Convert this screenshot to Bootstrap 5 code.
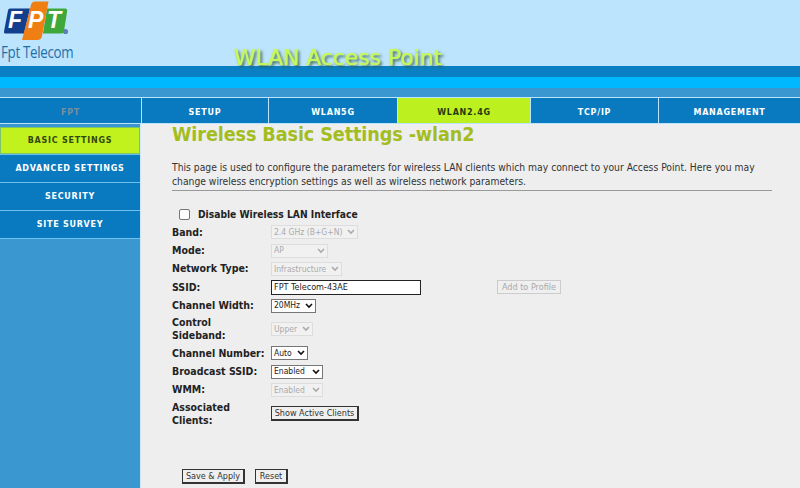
<!DOCTYPE html>
<html lang="en"><head><meta charset="utf-8"><title>WLAN Access Point</title>
<link rel="stylesheet" href="https://cdn.jsdelivr.net/npm/bootstrap@5.3.0/dist/css/bootstrap.min.css">
<style>
html,body{height:488px;overflow:hidden}
body{background:#eee;font-family:"DejaVu Sans Condensed","DejaVu Sans",sans-serif;font-size:10.5px;color:#222}
.hdr{height:66px;background:#bde4fd;position:relative}
.logo-svg{display:block}
.logo-name{font-family:"Open Sans",sans-serif;font-size:15.5px;letter-spacing:-.35px;color:#1d6fa8;line-height:1;position:absolute;left:1px;top:45px;white-space:nowrap;transform:scaleX(.86);transform-origin:left center}
.hdr-title{font-family:"DejaVu Sans",sans-serif;position:absolute;left:234px;top:45px;font-size:21.8px;line-height:26px;color:#c6f85c;text-shadow:0 0 1px #c6f85c,2px 2px 3px #2f5f46;white-space:nowrap;z-index:2}
.band-a{height:11px;background:#0a7fc4}.band-b{height:11px;background:#00b8ff}.band-c{height:9px;background:#3a97cf}
.topnav{height:27px;background:#bde4fd;padding-top:1px;gap:1px}
.tab-item{background:#0a7ac0;color:#fff;font-family:"DejaVu Sans",sans-serif;font-weight:700;font-size:8px;letter-spacing:.75px;height:25px;padding-top:4px;display:flex;align-items:center;justify-content:center}
.tab-on{background:#bdf01f;color:#263a10}
.tab-side{width:141px;color:#7c8f9e}
.w1{width:126px}.w2{width:128px}.w3{width:132px}.w4{width:127px}.w5{flex:1}
.main-wrap{height:364px}
.sidebar{width:141px;background:#3a97cf;border-right:1px solid #cfe6f5;flex:none;padding-top:3px}
.side-item{height:27px;margin-bottom:1px;background:#0a7ac0;color:#fff;font-family:"DejaVu Sans",sans-serif;font-weight:700;font-size:8px;letter-spacing:.75px;display:flex;align-items:center;justify-content:center;box-shadow:0 1px 0 #6fc0ee}
.side-on{background:#c2f21d;color:#33470f;border:1px solid #7cc46a}
.pane{flex:1;padding-left:31px;padding-right:28px;min-width:0}
.pg-title{font-family:"DejaVu Sans Condensed",sans-serif;font-size:19.6px;font-weight:700;color:#a3bd1f;line-height:22px;margin:0 0 14px;letter-spacing:-.1px}
.pg-intro{margin:0;line-height:14px;color:#333;font-size:10.25px}
.rule{margin:2px 0 0;border:0;border-top:1px solid #999;opacity:1}
.chk-row{margin-top:16px;margin-bottom:1px;height:15px;padding-left:7px;font-weight:700;font-size:10.2px;color:#222}
.fake-chk{width:11px;height:11px;border:1px solid #767676;border-radius:2px;background:#fff;margin-right:8px;flex:none}
.frow{height:18.4px;display:flex;align-items:center}
.flabel{width:99px;flex:none;font-weight:700;line-height:13px;color:#222}
.frow-tall{height:29px}
.sel{font-family:"DejaVu Sans Condensed",sans-serif;font-size:8.5px;height:14px;padding:0 2px;border:1px solid #767676;background:#fff;color:#222;display:flex;align-items:center;justify-content:space-between;gap:2px;white-space:nowrap;overflow:hidden}
.sel svg{flex:none}
.sel-off{border-color:#ddd;background:#f1f1f1;color:#aaa}
.txt{width:150px;height:15px;border:1px solid #222;border-radius:0;background:#fff;font-size:9px;padding:0 2px;font-family:inherit;color:#222}
.btn-prof{margin-left:76px;width:64px;height:14px;border:1px solid #ccc;background:#efefef;color:#aaa;font-size:9px;padding:0;line-height:12px;font-family:inherit}
.btn-raw{height:15px;background:#efefef;border:1px solid #333;border-right-width:2px;border-bottom-width:2px;font-size:9px;padding:0;line-height:11px;font-family:inherit;color:#333;white-space:nowrap}
.foot-row{margin-top:41px;padding-left:10px;gap:10px}
</style></head><body>
<header class="hdr">
<svg class="logo-svg" width="72" height="44" viewBox="0 0 72 44">
<path d="M10 8.500H30L24 33.500H6q-2.500 0-2-2L8 10.500q.4-2 2-2z" fill="#123f8e"/>
<path d="M47 8.500H65.500q2 0 1.700 2.500L64 31q-.4 2.500-2.500 2.500H43z" fill="#3fa83a"/>
<path d="M31 5q.8-3.500 4-3.500H48.500L42 36q-.8 4-4.500 4H22z" fill="#f07f13"/>
<circle cx="65.500" cy="31.500" r="2.600" fill="#5d7fb5"/>
<text x="8" y="27.500" font-family="Liberation Sans" font-weight="700" font-style="italic" font-size="23" fill="#fff">F</text>
<text x="28" y="27.500" font-family="Liberation Sans" font-weight="700" font-style="italic" font-size="23" fill="#fff">P</text>
<text x="47" y="27.500" font-family="Liberation Sans" font-weight="700" font-style="italic" font-size="23" fill="#fff">T</text>
</svg>
<div class="logo-name">Fpt Telecom</div>
<div class="hdr-title">WLAN Access Point</div>
</header>
<div class="band-a"></div><div class="band-b"></div><div class="band-c"></div>
<nav class="topnav d-flex">
<div class="tab-item tab-side">FPT</div>
<div class="tab-item w1">SETUP</div>
<div class="tab-item w2">WLAN5G</div>
<div class="tab-item tab-on w3">WLAN2.4G</div>
<div class="tab-item w4">TCP/IP</div>
<div class="tab-item w5">MANAGEMENT</div>
</nav>
<div class="main-wrap d-flex">
<aside class="sidebar">
<div class="side-item side-on">BASIC SETTINGS</div>
<div class="side-item">ADVANCED SETTINGS</div>
<div class="side-item">SECURITY</div>
<div class="side-item">SITE SURVEY</div>
</aside>
<main class="pane">
<h1 class="pg-title">Wireless Basic Settings -wlan2</h1>
<p class="pg-intro">This page is used to configure the parameters for wireless LAN clients which may connect to your Access Point. Here you may change wireless encryption settings as well as wireless network parameters.</p>
<hr class="rule">
<div class="chk-row d-flex align-items-center"><span class="fake-chk"></span>Disable Wireless LAN Interface</div>
<div class="frow"><div class="flabel">Band:</div><div class="sel sel-off" style="width:87px">2.4 GHz (B+G+N)<svg width="8" height="6" viewBox="0 0 8 6"><path d="M1 1l3 3 3-3" fill="none" stroke="#aaa" stroke-width="1.600"/></svg></div></div>
<div class="frow"><div class="flabel">Mode:</div><div class="sel sel-off" style="width:57px">AP<svg width="8" height="6" viewBox="0 0 8 6"><path d="M1 1l3 3 3-3" fill="none" stroke="#aaa" stroke-width="1.600"/></svg></div></div>
<div class="frow"><div class="flabel">Network Type:</div><div class="sel sel-off" style="width:71px">Infrastructure<svg width="8" height="6" viewBox="0 0 8 6"><path d="M1 1l3 3 3-3" fill="none" stroke="#aaa" stroke-width="1.600"/></svg></div></div>
<div class="frow"><div class="flabel">SSID:</div><input class="txt" type="text" value="FPT Telecom-43AE"><button class="btn-prof" type="button">Add to Profile</button></div>
<div class="frow"><div class="flabel">Channel Width:</div><div class="sel" style="width:45px">20MHz<svg width="8" height="6" viewBox="0 0 8 6"><path d="M1 1l3 3 3-3" fill="none" stroke="#111" stroke-width="1.600"/></svg></div></div>
<div class="frow frow-tall"><div class="flabel">Control<br>Sideband:</div><div class="sel sel-off" style="width:42px">Upper<svg width="8" height="6" viewBox="0 0 8 6"><path d="M1 1l3 3 3-3" fill="none" stroke="#aaa" stroke-width="1.600"/></svg></div></div>
<div class="frow"><div class="flabel">Channel Number:</div><div class="sel" style="width:37px">Auto<svg width="8" height="6" viewBox="0 0 8 6"><path d="M1 1l3 3 3-3" fill="none" stroke="#111" stroke-width="1.600"/></svg></div></div>
<div class="frow"><div class="flabel">Broadcast SSID:</div><div class="sel" style="width:52px">Enabled<svg width="8" height="6" viewBox="0 0 8 6"><path d="M1 1l3 3 3-3" fill="none" stroke="#111" stroke-width="1.600"/></svg></div></div>
<div class="frow"><div class="flabel">WMM:</div><div class="sel sel-off" style="width:52px">Enabled<svg width="8" height="6" viewBox="0 0 8 6"><path d="M1 1l3 3 3-3" fill="none" stroke="#aaa" stroke-width="1.600"/></svg></div></div>
<div class="frow frow-tall"><div class="flabel">Associated<br>Clients:</div><button class="btn-raw" type="button" style="width:88px">Show Active Clients</button></div>
<div class="foot-row d-flex"><button class="btn-raw" type="button" style="width:63px">Save &amp; Apply</button><button class="btn-raw" type="button" style="width:33px">Reset</button></div>
</main>
</div>
<script src="https://cdn.jsdelivr.net/npm/bootstrap@5.3.0/dist/js/bootstrap.bundle.min.js"></script>
</body></html>
